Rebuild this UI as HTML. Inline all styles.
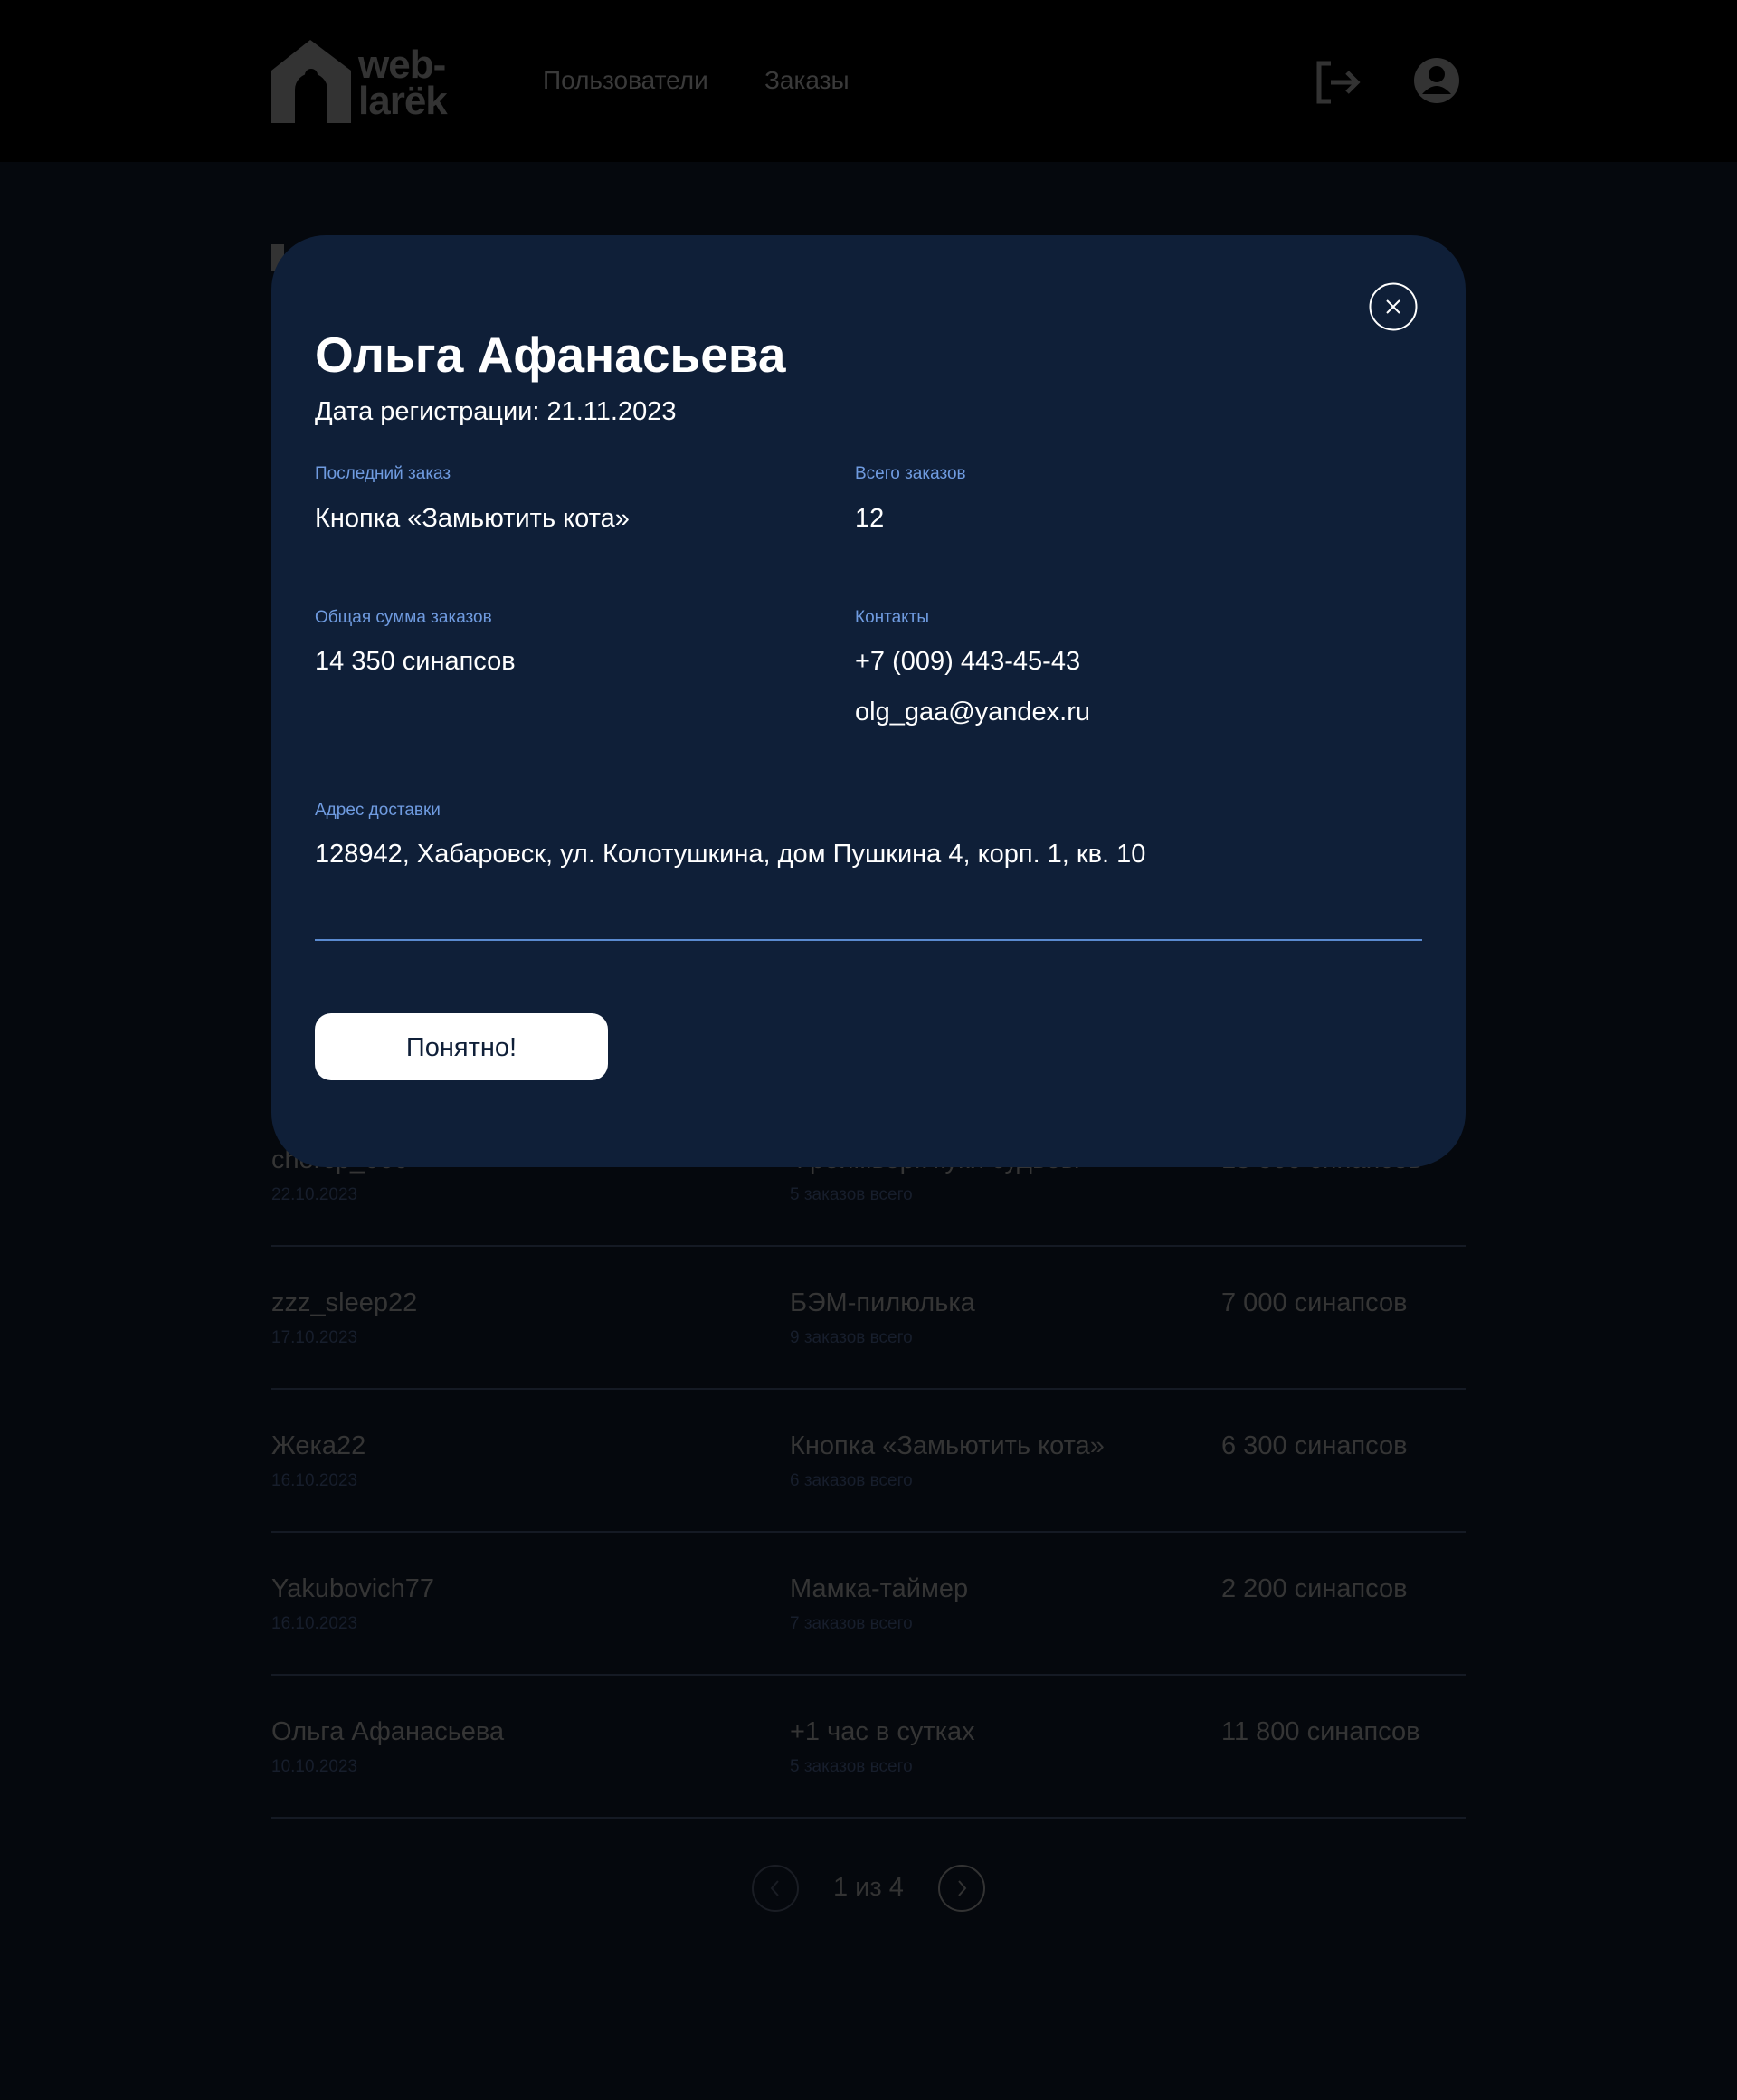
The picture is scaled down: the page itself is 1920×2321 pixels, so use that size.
<!DOCTYPE html>
<html><head><meta charset="utf-8"><style>
*{margin:0;padding:0;box-sizing:border-box}
body{width:1920px;height:2321px;background:#05080d;font-family:"Liberation Sans","Noto Sans CJK SC",sans-serif;position:relative;overflow:hidden}
.a{position:absolute;white-space:nowrap}
header{position:absolute;left:0;top:0;width:1920px;height:179px;background:#000}
.nav{color:#3a3a3a;font-size:28px;top:73px}
.sep{position:absolute;left:300px;width:1320px;height:2px;background:#151a24}
.nm{color:#353535;font-size:29px}
.dt{color:#171e2c;font-size:19px}
.modal{position:absolute;left:300px;top:260px;width:1320px;height:1030px;background:#0f1f38;border-radius:60px}
.lbl{color:#6f9be0;font-size:19px}
.val{color:#fff;font-size:29px}
</style></head><body>
<header>
<svg class="a" style="left:300px;top:44px" width="90" height="92" viewBox="0 0 90 92"><path d="M0 34 L43 0 L88 34 V92 H62 V55 A18 18 0 0 0 26 55 V92 H0 Z" fill="#333"/><circle cx="44" cy="39" r="7" fill="#000"/></svg>
<div class="a" style="left:396px;top:52px;color:#333;font-size:44px;font-weight:bold;line-height:40px;letter-spacing:-1px">web-<br>larëk</div>
<div class="a nav" style="left:600px">Пользователи</div>
<div class="a nav" style="left:845px">Заказы</div>
<svg class="a" style="left:1455px;top:67px" width="50" height="48" viewBox="0 0 50 48"><path d="M16 3 H3 V45 H16" fill="none" stroke="#333" stroke-width="5"/><path d="M16 24 H44 M34 13 L45 24 L34 35" fill="none" stroke="#333" stroke-width="5"/></svg>
<svg class="a" style="left:1563px;top:64px" width="50" height="50" viewBox="0 0 50 50"><circle cx="25" cy="25" r="25" fill="#333"/><circle cx="25" cy="18" r="9" fill="#000"/><path d="M9 40 Q25 22 41 40 Z" fill="#000"/></svg>
</header>
<div class="a" style="left:300px;top:270px;width:14px;height:30px;background:#333"></div>
<div class="a nm" style="left:300px;top:1266px">chercp_000</div>
<div class="a dt" style="left:300px;top:1310px">22.10.2023</div>
<div class="a nm" style="left:873px;top:1266px">Фреймворк куки судьбы</div>
<div class="a dt" style="left:873px;top:1310px">5 заказов всего</div>
<div class="a nm" style="left:1350px;top:1266px">13 500 синапсов</div>
<div class="sep" style="top:1376px"></div>
<div class="a nm" style="left:300px;top:1424px">zzz_sleep22</div><div class="a dt" style="left:300px;top:1468px">17.10.2023</div>
<div class="a nm" style="left:873px;top:1424px">БЭМ-пилюлька</div><div class="a dt" style="left:873px;top:1468px">9 заказов всего</div>
<div class="a nm" style="left:1350px;top:1424px">7 000 синапсов</div>
<div class="sep" style="top:1534px"></div>
<div class="a nm" style="left:300px;top:1582px">Жека22</div><div class="a dt" style="left:300px;top:1626px">16.10.2023</div>
<div class="a nm" style="left:873px;top:1582px">Кнопка «Замьютить кота»</div><div class="a dt" style="left:873px;top:1626px">6 заказов всего</div>
<div class="a nm" style="left:1350px;top:1582px">6 300 синапсов</div>
<div class="sep" style="top:1692px"></div>
<div class="a nm" style="left:300px;top:1740px">Yakubovich77</div><div class="a dt" style="left:300px;top:1784px">16.10.2023</div>
<div class="a nm" style="left:873px;top:1740px">Мамка-таймер</div><div class="a dt" style="left:873px;top:1784px">7 заказов всего</div>
<div class="a nm" style="left:1350px;top:1740px">2 200 синапсов</div>
<div class="sep" style="top:1850px"></div>
<div class="a nm" style="left:300px;top:1898px">Ольга Афанасьева</div><div class="a dt" style="left:300px;top:1942px">10.10.2023</div>
<div class="a nm" style="left:873px;top:1898px">+1 час в сутках</div><div class="a dt" style="left:873px;top:1942px">5 заказов всего</div>
<div class="a nm" style="left:1350px;top:1898px">11 800 синапсов</div>
<div class="sep" style="top:2008px"></div>
<svg class="a" style="left:830px;top:2059px" width="260" height="56" viewBox="0 0 260 56"><circle cx="27" cy="28" r="25" fill="none" stroke="#1a1d24" stroke-width="2"/><path d="M30 20 L23 28 L30 36" fill="none" stroke="#1a1d24" stroke-width="2"/><circle cx="233" cy="28" r="25" fill="none" stroke="#333" stroke-width="2"/><path d="M230 20 L237 28 L230 36" fill="none" stroke="#333" stroke-width="2"/></svg>
<div class="a nm" style="left:921px;top:2070px;color:#333">1 из 4</div>
<div class="modal">
<svg class="a" style="left:1213px;top:52px" width="54" height="54" viewBox="0 0 54 54"><circle cx="27" cy="27" r="25.5" fill="none" stroke="#fff" stroke-width="2"/><path d="M20 20 L34 34 M34 20 L20 34" stroke="#fff" stroke-width="2"/></svg>
<div class="a" style="left:48px;top:100px;color:#fff;font-size:55px;font-weight:bold">Ольга Афанасьева</div>
<div class="a val" style="left:48px;top:179px">Дата регистрации: 21.11.2023</div>
<div class="a lbl" style="left:48px;top:253px">Последний заказ</div>
<div class="a val" style="left:48px;top:297px">Кнопка «Замьютить кота»</div>
<div class="a lbl" style="left:645px;top:253px">Всего заказов</div>
<div class="a val" style="left:645px;top:297px">12</div>
<div class="a lbl" style="left:48px;top:412px">Общая сумма заказов</div>
<div class="a val" style="left:48px;top:455px">14 350 синапсов</div>
<div class="a lbl" style="left:645px;top:412px">Контакты</div>
<div class="a val" style="left:645px;top:455px">+7 (009) 443-45-43</div>
<div class="a val" style="left:645px;top:511px">olg_gaa@yandex.ru</div>
<div class="a lbl" style="left:48px;top:625px">Адрес доставки</div>
<div class="a val" style="left:48px;top:668px">128942, Хабаровск, ул. Колотушкина, дом Пушкина 4, корп. 1, кв. 10</div>
<div class="a" style="left:48px;top:778px;width:1224px;height:2px;background:#5a8ad0"></div>
<div class="a" style="left:48px;top:860px;width:324px;height:74px;background:#fff;border-radius:18px;color:#0f1f38;font-size:29px;text-align:center;line-height:76px">Понятно!</div>
</div>
</body></html>
